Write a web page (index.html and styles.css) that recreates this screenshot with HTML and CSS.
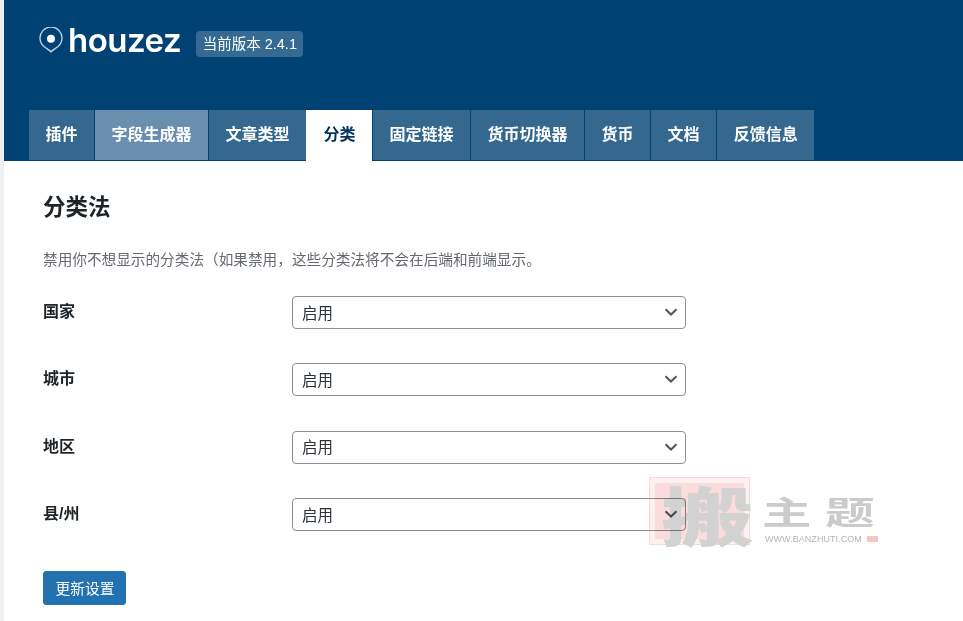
FILE: index.html
```html
<!DOCTYPE html>
<html lang="zh-CN">
<head>
<meta charset="utf-8">
<title>Houzez 分类</title>
<link rel="stylesheet" href="styles.css">
</head>
<body>
<div class="page">
  <header class="header">
    <div class="brand">
      <div class="logo">
        <svg class="pin" width="24" height="26" viewBox="0 0 24 26" aria-hidden="true">
          <path d="M12 24.800C10.500 22.900 8 22 5.300 19.800A11 11 0 1 1 18.700 19.800C16 22 13.500 22.900 12 24.800z" fill="none" stroke="#c4d2de" stroke-width="1.400"/>
          <circle cx="12" cy="11.800" r="4" fill="#fff"/>
        </svg>
        <span class="logo-text">houzez</span>
      </div>
      <span class="version">当前版本 2.4.1</span>
    </div>
    <nav class="tabs">
      <a class="tab">插件</a>
      <a class="tab tab-hover">字段生成器</a>
      <a class="tab">文章类型</a>
      <a class="tab tab-active">分类</a>
      <a class="tab">固定链接</a>
      <a class="tab">货币切换器</a>
      <a class="tab">货币</a>
      <a class="tab">文档</a>
      <a class="tab">反馈信息</a>
    </nav>
  </header>
  <main class="content">
    <h1 class="title">分类法</h1>
    <p class="desc">禁用你不想显示的分类法（如果禁用，这些分类法将不会在后端和前端显示。</p>
    <div class="fields">
      <div class="field">
        <label class="field-label">国家</label>
        <div class="select-wrap">
          <select class="select"><option>启用</option></select>
          <svg class="chevron" width="14" height="8" viewBox="0 0 14 8" aria-hidden="true"><path d="M1.500 1.200 7 6.500l5.500-5.300" fill="none" stroke="#50575e" stroke-width="2"/></svg>
        </div>
      </div>
      <div class="field">
        <label class="field-label">城市</label>
        <div class="select-wrap">
          <select class="select"><option>启用</option></select>
          <svg class="chevron" width="14" height="8" viewBox="0 0 14 8" aria-hidden="true"><path d="M1.500 1.200 7 6.500l5.500-5.300" fill="none" stroke="#50575e" stroke-width="2"/></svg>
        </div>
      </div>
      <div class="field">
        <label class="field-label">地区</label>
        <div class="select-wrap">
          <select class="select"><option>启用</option></select>
          <svg class="chevron" width="14" height="8" viewBox="0 0 14 8" aria-hidden="true"><path d="M1.500 1.200 7 6.500l5.500-5.300" fill="none" stroke="#50575e" stroke-width="2"/></svg>
        </div>
      </div>
      <div class="field">
        <label class="field-label">县/州</label>
        <div class="select-wrap">
          <select class="select"><option>启用</option></select>
          <svg class="chevron" width="14" height="8" viewBox="0 0 14 8" aria-hidden="true"><path d="M1.500 1.200 7 6.500l5.500-5.300" fill="none" stroke="#50575e" stroke-width="2"/></svg>
        </div>
      </div>
    </div>
    <button class="submit" type="button">更新设置</button>
  </main>
</div>
<div class="watermark" aria-hidden="true">
  <div class="stamp"><span class="stamp-char">搬</span></div>
  <div class="wm-side">
    <div class="wm-title"><span class="wm-glyph">主</span><span class="wm-glyph">题</span></div>
    <div class="wm-url"><span>WWW.BANZHUTI.COM</span><i class="wm-dot"></i></div>
  </div>
</div>
</body>
</html>
```
FILE: styles.css
```css
* { box-sizing: border-box; }
html, body { margin: 0; height: 100%; }
body {
  background: #f0f0f1;
  font-family: "Liberation Sans", "Noto Sans CJK SC", sans-serif;
  color: #1d2327;
  overflow: hidden;
  position: relative;
}
.page {
  margin-left: 4px;
  height: 100%;
  background: #fff;
}
.header {
  height: 161px;
  background: #004274;
  display: flex;
  flex-direction: column;
  justify-content: space-between;
  padding: 27px 0 0 25px;
}
.brand {
  display: flex;
  align-items: flex-start;
  gap: 15px;
  padding-left: 10px;
}
.logo {
  display: flex;
  align-items: center;
  gap: 5px;
  height: 26px;
}
.pin { flex: none; }
.logo-text {
  font-family: Inter, sans-serif;
  font-weight: 600;
  font-size: 33px;
  line-height: 26px;
  color: #fff;
  letter-spacing: -0.500px;
}
.version {
  background: #356a93;
  color: #fff;
  font-size: 14.500px;
  line-height: 26px;
  height: 26px;
  padding: 0 6.500px;
  border-radius: 4px;
  white-space: nowrap;
  margin-top: 4px;
}
.tabs {
  display: flex;
  gap: 1px;
  height: 51px;
}
.tab {
  display: flex;
  align-items: center;
  padding: 0 16.500px;
  background: #35688f;
  color: #fff;
  font-size: 16px;
  font-weight: 700;
  line-height: 50px;
  border-bottom: 1px solid #004274;
}
.tab-hover { background: #6a8fae; }
.tab-active {
  background: #fff;
  color: #00345c;
  margin-left: -1px;
  padding-left: 17.500px;
  border-bottom: 1px solid #fff;
}
.content { padding: 30px 0 0 39px; }
.title {
  margin: 0;
  font-size: 22.500px;
  line-height: 34px;
  font-weight: 700;
  color: #1d2327;
}
.desc {
  margin: 23px 0 0;
  font-size: 14.650px;
  line-height: 24px;
  color: #646970;
  text-spacing-trim: space-all;
}
.fields {
  margin-top: 24px;
  display: flex;
  flex-direction: column;
  gap: 34.400px;
}
.field {
  display: grid;
  grid-template-columns: 249px 394px;
  height: 33px;
}
.field-label {
  font-size: 16px;
  font-weight: 700;
  line-height: 31px;
  color: #1d2327;
}
.select-wrap { position: relative; height: 33px; }
.select {
  appearance: none;
  -webkit-appearance: none;
  display: block;
  width: 100%;
  height: 33px;
  border: 1px solid #8c8f94;
  border-radius: 4px;
  background: #fff;
  color: #2c3338;
  font-family: inherit;
  font-size: 15.500px;
  padding: 1px 24px 0 9px;
}
.chevron {
  position: absolute;
  right: 8px;
  top: 12px;
  pointer-events: none;
}
.submit {
  display: block;
  margin-top: 39.500px;
  width: 83px;
  height: 34px;
  padding: 0 0 0 1px;
  background: #2271b1;
  color: #fff;
  border: 1px solid #2271b1;
  border-radius: 3px;
  font-family: inherit;
  font-size: 14.700px;
}
.watermark {
  position: absolute;
  left: 650px;
  top: 478px;
  display: flex;
  mix-blend-mode: multiply;
  pointer-events: none;
}
.stamp {
  width: 99px;
  height: 66px;
  background: #fbdcdc;
  border: 5px solid #fdf0f0;
  box-shadow: 0 0 0 1px #fad8d8;
  position: relative;
}
.stamp-char {
  position: absolute;
  left: 6px;
  top: -6px;
  font-family: "Noto Sans CJK SC", sans-serif;
  font-weight: 900;
  font-size: 64px;
  line-height: 72px;
  transform: scaleX(1.450);
  transform-origin: left top;
  color: #d2d2d2;
  white-space: nowrap;
}
.wm-side {
  margin-left: 13px;
  width: 118px;
}
.wm-title {
  display: flex;
  justify-content: space-between;
  width: 113px;
  font-family: "Noto Sans CJK SC", sans-serif;
  font-weight: 700;
  font-size: 30px;
  line-height: 36px;
  color: #cbcbcb;
  white-space: nowrap;
  margin-top: 14px;
}
.wm-glyph {
  display: block;
  width: 50px;
  transform: scale(1.650, 1.050);
  transform-origin: left center;
}
.wm-url {
  display: flex;
  align-items: center;
  gap: 5px;
  margin-top: 5px;
  padding-left: 3px;
  font-size: 9px;
  letter-spacing: 0.050px;
  line-height: 12px;
  color: #b5b5b5;
  white-space: nowrap;
}
.wm-dot {
  display: block;
  width: 11px;
  height: 6px;
  background: #f8c4c4;
}
```
